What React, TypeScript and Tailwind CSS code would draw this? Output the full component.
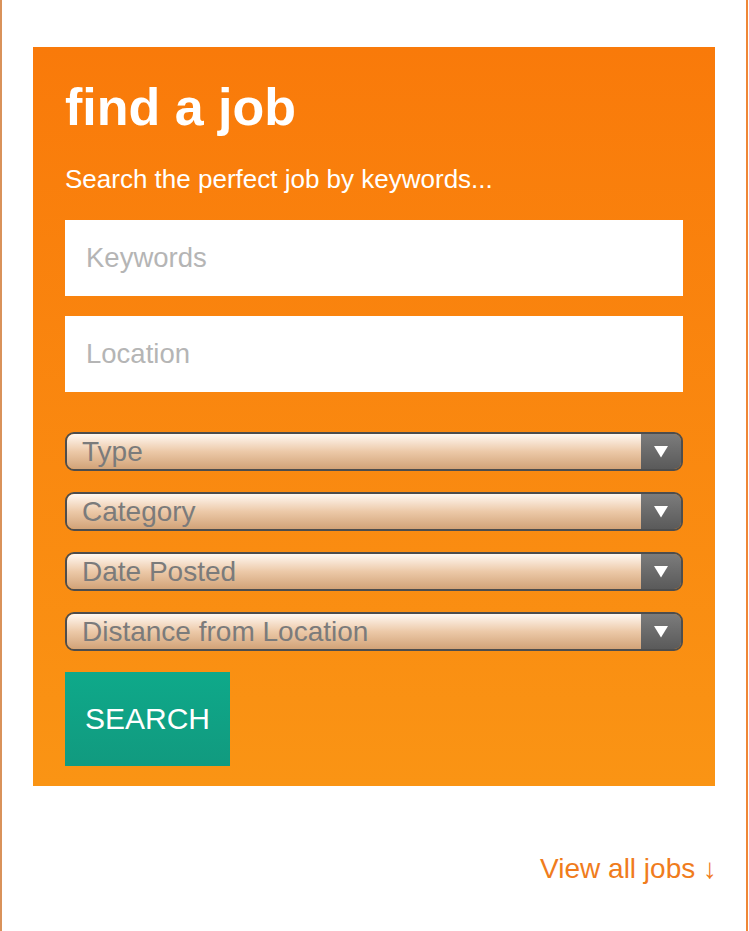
import React from "react";

const selects = ["Type", "Category", "Date Posted", "Distance from Location"];

function SelectBox({ label }: { label: string }) {
  return (
    <div className="flex h-[39px] w-full items-stretch overflow-hidden rounded-[9px] border-2 border-[#4d4d4d]">
      <div className="flex flex-1 items-center bg-gradient-to-b from-[#fff8f2] via-[#ecc9a8] to-[#d2a378] pl-[15px] text-[28px] leading-none text-[#7b7b7b]">
        {label}
      </div>
      <div className="flex w-[40px] items-center justify-center bg-gradient-to-b from-[#7c7c7c] to-[#5a5a5a]">
        <svg width="14" height="12" viewBox="0 0 14 12">
          <polygon points="0,0 14,0 7,11.5" fill="#ffffff" />
        </svg>
      </div>
    </div>
  );
}

export default function App() {
  return (
    <div
      className="min-h-[931px] w-[748px] border-l-2 border-r-2 border-l-[#d9925a] border-r-[#ef8636] bg-white"
      style={{ fontFamily: '"Liberation Sans", Arial, Helvetica, sans-serif' }}
    >
      <div className="pt-[47px] pl-[31px]">
        <div className="w-[682px] bg-gradient-to-b from-[#f97a0a] to-[#fa9414] px-[32px] pt-[34px] pb-[20px]">
          <h1 className="text-[52px] font-bold leading-[52px] text-white">find a job</h1>
          <p className="mt-[31px] text-[26px] leading-[30px] text-white">
            Search the perfect job by keywords...
          </p>
          <div className="mt-[26px] flex h-[76px] items-center bg-white pl-[21px] text-[27.5px] text-[#b5b5b5]">
            Keywords
          </div>
          <div className="mt-[20px] flex h-[76px] items-center bg-white pl-[21px] text-[27.5px] text-[#b5b5b5]">
            Location
          </div>
          <div className="mt-[40px] flex flex-col gap-[21px]">
            {selects.map((s) => (
              <SelectBox key={s} label={s} />
            ))}
          </div>
          <button className="mt-[21px] flex h-[94px] w-[165px] items-center justify-center bg-gradient-to-b from-[#0ea98a] to-[#119a7f] text-[30px] leading-none text-white">
            SEARCH
          </button>
        </div>
      </div>
      <div className="mt-[67px] flex w-[715px] justify-end">
        <span className="text-[28px] leading-[32px] text-[#f07c1c]">View all jobs ↓</span>
      </div>
    </div>
  );
}
